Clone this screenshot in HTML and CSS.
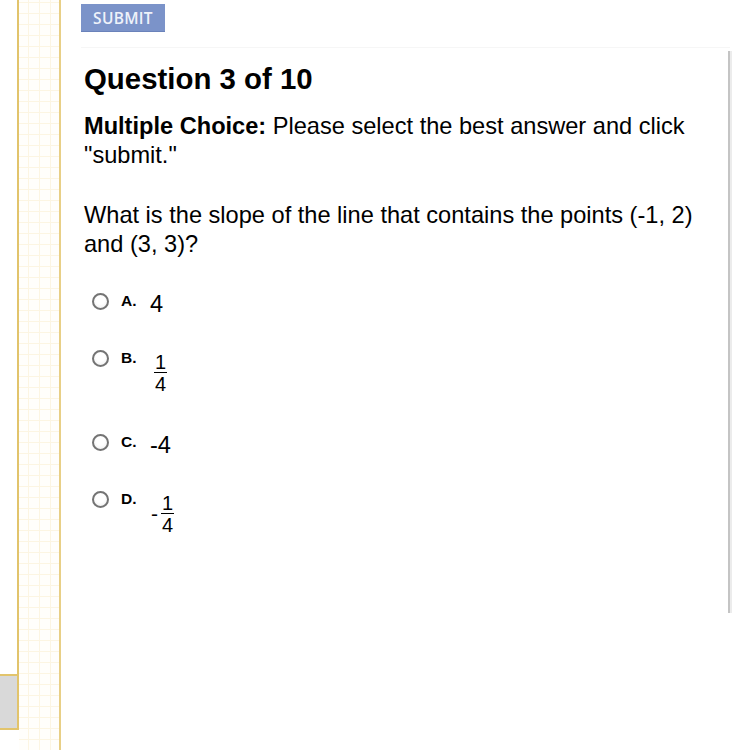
FILE: index.html
```html
<!DOCTYPE html>
<html>
<head>
<meta charset="utf-8">
<link rel="stylesheet" href="styles.css">
</head>
<body>
<div class="page">
  <aside class="sidebar">
    <div class="strip"><div class="strip-box"></div></div>
    <div class="grid"></div>
  </aside>
  <main class="main">
    <div class="toolbar">
      <button class="submit">SUBMIT</button>
    </div>
    <section class="panel">
      <h1 class="title">Question 3 of 10</h1>
      <p class="instructions"><b>Multiple Choice:</b> Please select the best answer and click "submit."</p>
      <p class="question">What is the slope of the line that contains the points (-1, 2) and (3, 3)?</p>
      <ul class="options">
        <li class="option">
          <span class="radio"></span><span class="letter">A.</span>
          <span class="value">4</span>
        </li>
        <li class="option">
          <span class="radio"></span><span class="letter">B.</span>
          <span class="value frac-value"><span class="frac"><span class="num">1</span><span class="den">4</span></span></span>
        </li>
        <li class="option">
          <span class="radio"></span><span class="letter">C.</span>
          <span class="value">-4</span>
        </li>
        <li class="option">
          <span class="radio"></span><span class="letter">D.</span>
          <span class="value frac-value"><span class="minus">-</span><span class="frac"><span class="num">1</span><span class="den">4</span></span></span>
        </li>
      </ul>
    </section>
  </main>
</div>
</body>
</html>
```
FILE: styles.css
```css
* { box-sizing: border-box; }
html, body { margin: 0; padding: 0; background: #fff; }
body { font-family: "Liberation Sans", Arial, sans-serif; color: #000; }

.page { display: flex; height: 750px; overflow: hidden; }

.sidebar { display: flex; width: 61px; flex: none; height: 750px; }
.strip {
  width: 19px; height: 730px;
  border-right: 2px solid #e2c46c;
  display: flex; flex-direction: column; justify-content: flex-end;
}
.strip-box {
  height: 56px;
  background: #d9d9d9;
  border-top: 2px solid #e2c46c;
  border-bottom: 2px solid #e2c46c;
}
.grid {
  width: 42px; height: 750px;
  border-right: 2px solid #e8cf86;
  background-color: #fffefb;
  background-image:
    repeating-linear-gradient(90deg, transparent 0 9px, #fcf5e2 9px 10px, transparent 10px 11px),
    repeating-linear-gradient(0deg, transparent 0 10px, #fcf5e2 10px 11px);
}

.main { flex: 1; padding-left: 20px; }
.toolbar { padding-top: 4px; height: 48px; border-bottom: 1px solid #f6f6f6; margin-right: 20px; }
.submit {
  display: block;
  width: 84px; height: 28px;
  padding: 0; margin: 0;
  border: none;
  border-bottom: 1px solid #6a82ba;
  background: #7b93c9;
  color: #eef2fa;
  font-family: "Open Sans", sans-serif;
  font-weight: 600;
  font-size: 15.5px;
  letter-spacing: 0.3px;
}

.panel {
  margin-top: 3px;
  width: 649px;
  height: 562px;
  border-right: 2px solid #c4c4c4;
  box-shadow: 2px 0 0 #ececec;
  padding: 11px 0 0 3px;
}
.title {
  margin: 0;
  font-size: 29.4px;
  line-height: 34px;
  font-weight: bold;
}
.instructions, .question {
  margin: 0;
  font-size: 23.6px;
  line-height: 29px;
}
.instructions { margin-top: 16px; padding-right: 20px; }
.question { margin-top: 31px; padding-right: 20px; }

.options { list-style: none; margin: 31px 0 0 0; padding: 0; }
.option { display: flex; align-items: flex-start; margin-bottom: 28px; }
.radio {
  flex: none;
  width: 17px; height: 17px;
  margin: 3px 0 0 8px;
  border-radius: 50%;
  border: 2px solid #747474;
  background: radial-gradient(circle at 50% 40%, #fff 40%, #ececec 100%);
}
.letter {
  font-weight: bold;
  font-size: 15.5px;
  line-height: 17px;
  margin: 2px 0 0 12px;
  width: 29px;
}
.value { font-size: 23.6px; line-height: 29px; }
.frac-value { display: inline-flex; align-items: center; margin: 5px 0 9px 0; }
.minus { font-size: 21px; line-height: 20px; margin-right: 3px; margin-left: 1px; }
.frac {
  display: inline-flex; flex-direction: column; align-items: center;
  font-size: 20px; line-height: 20px;
  margin-left: 4px;
}
.minus + .frac { margin-left: 0; }
.num { padding: 0 1px 0; }
.den { border-top: 1px solid #000; padding: 1px 1px 0; align-self: stretch; text-align: center; }
```
